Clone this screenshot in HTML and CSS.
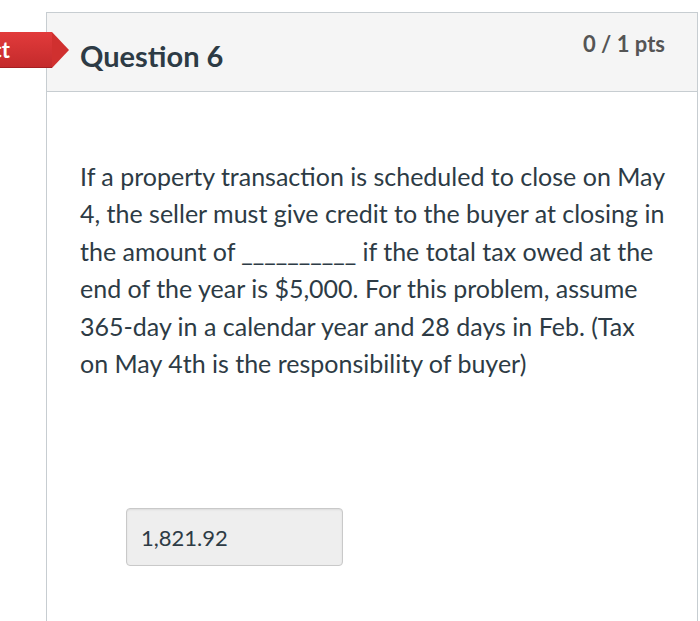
FILE: index.html
```html
<!DOCTYPE html>
<html>
<head>
<meta charset="utf-8">
<link rel="stylesheet" href="styles.css">
</head>
<body>
<div class="page">
  <div class="tag"><span class="tag-text">Incorrect</span></div>
  <div class="card">
    <div class="card-header">
      <h2 class="title">Question 6</h2>
      <div class="pts">0 / 1 pts</div>
    </div>
    <div class="card-body">
      <p class="question">If a property transaction is scheduled to close on May 4, the seller must give credit to the buyer at closing in the amount of __________ if the total tax owed at the end of the year is $5,000. For this problem, assume 365-day in a calendar year and 28 days in Feb. (Tax on May 4th is the responsibility of buyer)</p>
      <div class="answer">1,821.92</div>
    </div>
  </div>
</div>
</body>
</html>
```

FILE: styles.css
```css
html, body {
  margin: 0;
  padding: 0;
  background: #ffffff;
  overflow: hidden;
}

body {
  font-family: Lato, "Noto Sans", sans-serif;
  color: #2d3b45;
}

.page {
  position: relative;
  padding: 12px 0 0 46px;
  height: 609px;
}

.card {
  width: 650px;
  height: 700px;
  border: 1px solid #c7cdd1;
  background: #fff;
}

.card-header {
  height: 78px;
  background: #f5f5f5;
  border-bottom: 1px solid #c7cdd1;
  display: flex;
  justify-content: space-between;
  align-items: flex-start;
  padding: 0 32px 0 33px;
}

.title {
  margin: 26px 0 0 0;
  font-size: 29px;
  line-height: 1.2;
  font-weight: 700;
  color: #2d3b45;
}

.pts {
  margin-top: 18px;
  font-size: 22px;
  line-height: 1.2;
  font-weight: 700;
  color: #555555;
}

.card-body {
  padding: 66px 31px 0 33px;
}

.question {
  margin: 0;
  font-size: 25px;
  line-height: 37.4px;
  color: #2d3b45;
}

.answer {
  margin: 126px 0 0 46px;
  width: 201px;
  height: 56px;
  box-sizing: content-box;
  padding: 0 0 0 14px;
  background: #eeeeee;
  border: 1px solid #c9c9c9;
  border-radius: 4px;
  box-shadow: inset 0 1px 2px rgba(0, 0, 0, 0.08);
  display: flex;
  align-items: center;
  font-size: 22px;
  color: #2d3b45;
}

.tag {
  position: absolute;
  left: 0;
  top: 32px;
  width: 52px;
  height: 36px;
  background: linear-gradient(#e23b3b, #c42a2c);
  border-bottom: 1px solid #a51f22;
  box-sizing: border-box;
  z-index: 2;
  overflow: visible;
}

.tag::after {
  content: "";
  position: absolute;
  left: 52px;
  top: 0;
  width: 0;
  height: 0;
  border-top: 18px solid transparent;
  border-bottom: 18px solid transparent;
  border-left: 17px solid #d0302f;
}

.tag-text {
  position: absolute;
  right: 42px;
  top: 5px;
  color: #ffffff;
  font-size: 22px;
  font-weight: 700;
  line-height: 26px;
  white-space: nowrap;
}
```
